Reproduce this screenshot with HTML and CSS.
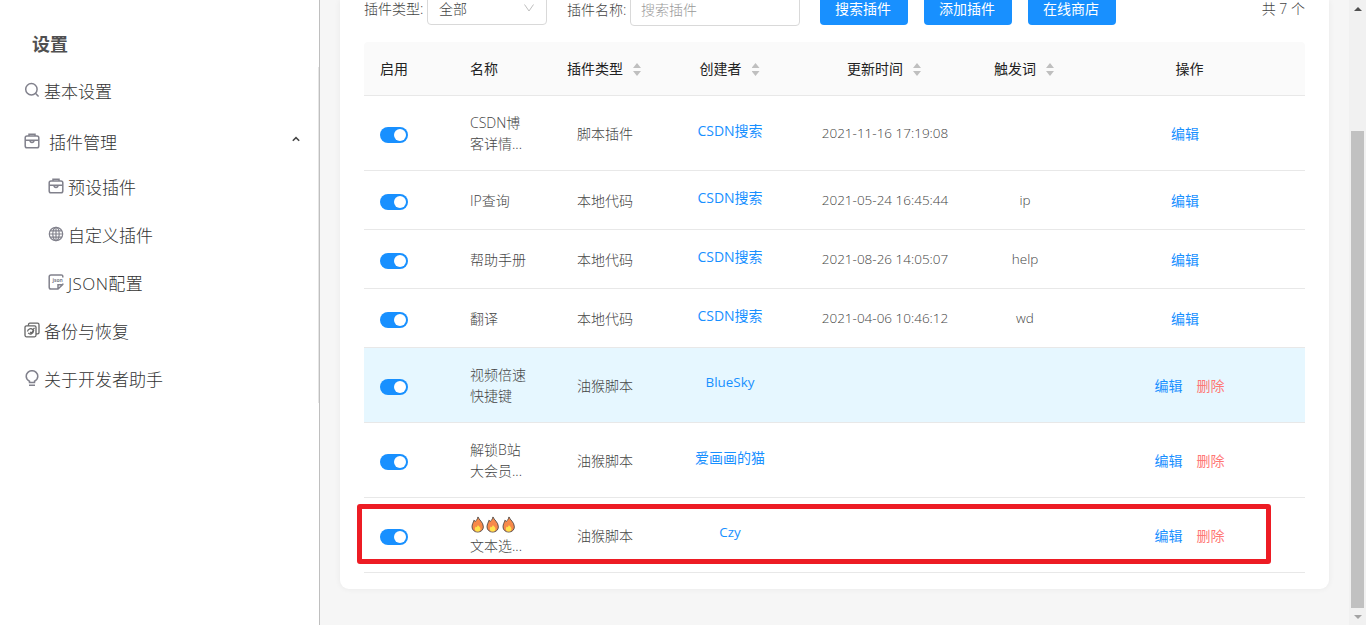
FILE: index.html
```html
<!DOCTYPE html>
<html lang="zh-CN">
<head>
    <meta charset="UTF-8">
    <meta name="viewport" content="width=device-width, initial-scale=1.0">
    <title>设置</title>
    <link rel="stylesheet" href="styles.css">
</head>
<body>
    <!-- shared icons -->
    <svg class="sprite">
        <symbol id="icon-case" viewBox="0 0 16 16">
            <rect x="1.2" y="3" width="13.6" height="11.8" rx="1.8"/>
            <path d="M5 3V1.2h6V3M1.2 7.2h13.6M6 7.4c.2 2.8 3.8 2.8 4 0"/>
        </symbol>
        <symbol id="icon-fire" viewBox="0 0 16 18">
            <path d="M8.3 1C9.2 4 14 6.500 14 11.500c0 3.200-2.500 5.500-6 5.500s-6-2.300-6-5.500C2 8.500 3.500 7 4 4.500l1.500 1.200C7 4.500 7.800 3 8.300 1z" fill="#f7894a" stroke="#554c48" stroke-width="1"/>
            <path d="M8.300 9.500c.8 1.500 2.700 2.300 2.700 4.300 0 1.700-1.200 2.700-3 2.700s-3-1-3-2.700c0-1.300.5-2 1-2.800l1 .8z" fill="#ffe34d"/>
        </symbol>
    </svg>
    <div class="layout">
        <aside class="sidebar">
            <h2 class="sidebar-title">设置</h2>
            <ul class="menu">
                <li class="menu-item">
                    <svg class="icon" viewBox="0 0 16 16"><circle cx="7.400" cy="7.200" r="5.700"/><path d="M11.400 11.200l3.200 3.400"/></svg>
                    <span>基本设置</span>
                </li>
                <li class="menu-item menu-parent">
                    <svg class="icon"><use href="#icon-case"/></svg>
                    <span>插件管理</span>
                    <svg class="arrow" viewBox="0 0 8 6"><path d="M.8 4.800L4 1.600l3.200 3.200"/></svg>
                </li>
                <li class="menu-item menu-sub">
                    <svg class="icon"><use href="#icon-case"/></svg>
                    <span>预设插件</span>
                </li>
                <li class="menu-item menu-sub">
                    <svg class="icon icon-thin" viewBox="0 0 16 16"><circle cx="8" cy="8" r="6.700"/><ellipse cx="8" cy="8" rx="3.200" ry="6.700"/><path d="M8 1.300v13.400M1.300 8h13.400M2.300 4.800h11.400M2.300 11.200h11.400"/></svg>
                    <span>自定义插件</span>
                </li>
                <li class="menu-item menu-sub">
                    <svg class="icon" viewBox="0 0 16 16"><path d="M14.800 3.500V2.500c0-1-.6-1.600-1.600-1.600H3c-1 0-1.800.8-1.800 1.800v10.600c0 1 .8 1.800 1.800 1.800h7l4.800-4.600V9.500M10 15v-4.200h4.800"/><text class="icon-text" x="4.400" y="7.600">json</text></svg>
                    <span class="json">JSON配置</span>
                </li>
                <li class="menu-item">
                    <svg class="icon icon-dark" viewBox="0 0 16 16"><rect x="1" y="3.800" width="11" height="11" rx="1.500"/><path d="M4.500 3.800V2.500c0-.7.500-1.300 1.300-1.300h7.700c.8 0 1.500.6 1.500 1.500v7.800c0 .8-.6 1.300-1.300 1.300H12M3.500 9.500c.3-2.800 3.800-3.700 5.300-1.700l1.700-2M9.500 9c-.2 3-3.600 4-5.300 1.800M6 10l1.500 1L10 8"/></svg>
                    <span>备份与恢复</span>
                </li>
                <li class="menu-item">
                    <svg class="icon" viewBox="0 0 16 16"><path d="M5.500 12.500V11.200C3.400 10.200 2.200 8.500 2.200 6.300a5.800 5.600 0 0 1 11.600 0c0 2.200-1.200 3.900-3.300 4.900v1.300zM5 15.200h6"/></svg>
                    <span>关于开发者助手</span>
                </li>
            </ul>
        </aside>
        <main class="main">
            <section class="card">
                <div class="toolbar">
                    <label class="label-type">插件类型:</label>
                    <div class="select">
                        <span>全部</span>
                        <svg viewBox="0 0 12 10"><path d="M1.500 1.500L6 8l4.500-6.500"/></svg>
                    </div>
                    <label class="label-name">插件名称:</label>
                    <input class="input" type="text" placeholder="搜索插件">
                    <button class="btn">搜索插件</button>
                    <button class="btn">添加插件</button>
                    <button class="btn">在线商店</button>
                    <span class="total">共 7 个</span>
                </div>
                <table class="table">
                    <colgroup>
                        <col class="col-enable">
                        <col class="col-name">
                        <col class="col-type">
                        <col class="col-author">
                        <col class="col-time">
                        <col class="col-word">
                        <col>
                    </colgroup>
                    <thead>
                        <tr>
                            <th class="left">启用</th>
                            <th class="left">名称</th>
                            <th class="sortable">插件类型<i class="sorter"></i></th>
                            <th class="sortable">创建者<i class="sorter"></i></th>
                            <th class="sortable">更新时间<i class="sorter"></i></th>
                            <th class="sortable">触发词<i class="sorter"></i></th>
                            <th class="ops">操作</th>
                        </tr>
                    </thead>
                    <tbody>
                        <tr class="tall">
                            <td class="left"><i class="switch"></i></td>
                            <td class="left">CSDN博<br>客详情...</td>
                            <td>脚本插件</td>
                            <td><a class="author">CSDN搜索</a></td>
                            <td class="time">2021-11-16 17:19:08</td>
                            <td></td>
                            <td class="single"><a>编辑</a></td>
                        </tr>
                        <tr>
                            <td class="left"><i class="switch"></i></td>
                            <td class="left">IP查询</td>
                            <td>本地代码</td>
                            <td><a class="author">CSDN搜索</a></td>
                            <td class="time">2021-05-24 16:45:44</td>
                            <td class="word">ip</td>
                            <td class="single"><a>编辑</a></td>
                        </tr>
                        <tr>
                            <td class="left"><i class="switch"></i></td>
                            <td class="left">帮助手册</td>
                            <td>本地代码</td>
                            <td><a class="author">CSDN搜索</a></td>
                            <td class="time">2021-08-26 14:05:07</td>
                            <td class="word">help</td>
                            <td class="single"><a>编辑</a></td>
                        </tr>
                        <tr>
                            <td class="left"><i class="switch"></i></td>
                            <td class="left">翻译</td>
                            <td>本地代码</td>
                            <td><a class="author">CSDN搜索</a></td>
                            <td class="time">2021-04-06 10:46:12</td>
                            <td class="word">wd</td>
                            <td class="single"><a>编辑</a></td>
                        </tr>
                        <tr class="tall hover">
                            <td class="left"><i class="switch"></i></td>
                            <td class="left">视频倍速<br>快捷键</td>
                            <td>油猴脚本</td>
                            <td><a class="author latin">BlueSky</a></td>
                            <td></td>
                            <td></td>
                            <td class="ops"><a>编辑</a><a class="delete">删除</a></td>
                        </tr>
                        <tr class="tall">
                            <td class="left"><i class="switch"></i></td>
                            <td class="left">解锁B站<br>大会员...</td>
                            <td>油猴脚本</td>
                            <td><a class="author">爱画画的猫</a></td>
                            <td></td>
                            <td></td>
                            <td class="ops"><a>编辑</a><a class="delete">删除</a></td>
                        </tr>
                        <tr class="tall">
                            <td class="left"><i class="switch"></i></td>
                            <td class="left">
                                <div class="fires">
                                    <svg><use href="#icon-fire"/></svg>
                                    <svg><use href="#icon-fire"/></svg>
                                    <svg><use href="#icon-fire"/></svg>
                                </div>
                                文本选...
                            </td>
                            <td>油猴脚本</td>
                            <td><a class="author latin">Czy</a></td>
                            <td></td>
                            <td></td>
                            <td class="ops"><a>编辑</a><a class="delete">删除</a></td>
                        </tr>
                    </tbody>
                </table>
                <div class="mark"></div>
            </section>
        </main>
        <div class="scrollbar">
            <i class="scroll-up"></i>
            <div class="scroll-thumb"></div>
            <i class="scroll-down"></i>
        </div>
    </div>
</body>
</html>
```
FILE: styles.css
```css
* {
    box-sizing: border-box;
}
body {
    margin: 0;
    height: 100vh;
    overflow: hidden;
    font-family: "Open Sans", "Noto Sans CJK SC", sans-serif;
    font-size: 14px;
    font-weight: 300;
    line-height: 21px;
    color: #444;
    background: #f6f6f6;
}
.sprite {
    display: none;
}
.layout {
    display: flex;
    height: 100vh;
}

/* sidebar */
.sidebar {
    width: 320px;
    flex: none;
    padding-top: 31px;
    background: #fff;
    border-right: 1px solid #bfbfbf;
}
.sidebar-title {
    margin: 0 0 10px 32px;
    font-size: 18px;
    font-weight: 700;
    line-height: 26px;
    color: #505050;
}
.menu {
    margin: 0;
    padding: 0;
    list-style: none;
    border-right: 1px solid #e6e6e6;
}
.menu-item {
    display: flex;
    align-items: center;
    height: 48px;
    padding-left: 24px;
    font-size: 17px;
    color: #333;
}
.menu-sub {
    padding-left: 48px;
}
.menu-parent {
    padding-top: 6px;
    padding-right: 18px;
}
.menu-parent span {
    margin-left: 5px;
}
.json {
    letter-spacing: 0.4px;
}
.icon {
    width: 16px;
    height: 16px;
    flex: none;
    margin: -3px 4px 0 0;
    fill: none;
    stroke: #81818c;
    stroke-width: 1.5;
}
.icon-thin {
    stroke-width: 1.2;
}
.icon-dark {
    stroke: #666;
    stroke-width: 1.3;
}
.icon-text {
    font: 700 5px "Open Sans", sans-serif;
    fill: #81818c;
    stroke: none;
}
.arrow {
    width: 8px;
    height: 6px;
    margin: -7px 0 0 auto;
    fill: none;
    stroke: #444;
    stroke-width: 1.5;
}

/* content */
.main {
    flex: 1;
    padding: 0 20px;
}
.card {
    position: relative;
    height: 589px;
    padding: 0 24px;
    background: #fff;
    border-radius: 0 0 9px 9px;
    box-shadow: 0 0 6px rgba(0, 0, 0, 0.06);
}
.toolbar {
    display: flex;
    align-items: flex-start;
    height: 42px;
}
.label-type {
    width: 63px;
    margin-top: -2px;
}
.select {
    display: flex;
    align-items: center;
    justify-content: space-between;
    width: 120px;
    height: 32px;
    margin: -7px 20px 0 0;
    padding: 0 11px 2px;
    border: 1px solid #d9d9d9;
    border-radius: 4px;
}
.select svg {
    width: 12px;
    height: 10px;
    fill: none;
    stroke: #bfbfbf;
}
.label-name {
    width: 63px;
    margin-top: -1px;
}
.input {
    width: 170px;
    height: 32px;
    margin: -6px 20px 0 0;
    padding: 0 10px 2px;
    font: inherit;
    border: 1px solid #d9d9d9;
    border-radius: 4px;
}
.input::placeholder {
    color: #999;
}
.btn {
    width: 88px;
    height: 32px;
    margin: -7px 16px 0 0;
    padding: 0 2px 1px 0;
    font: inherit;
    font-weight: 400;
    color: #fff;
    background: #1890ff;
    border: none;
    border-radius: 4px;
}
.total {
    margin: -2px 0 0 auto;
}

/* table */
.table {
    width: 100%;
    table-layout: fixed;
    border-collapse: separate;
    border-spacing: 0;
    text-align: center;
}
.col-enable {
    width: 90px;
}
.col-name {
    width: 88px;
}
.col-type {
    width: 126px;
}
.col-author {
    width: 125px;
}
.col-time {
    width: 184px;
}
.col-word {
    width: 96px;
}
th {
    height: 54px;
    padding: 0;
    font-weight: 400;
    color: #222;
    background: #fafafa;
    border-bottom: 1px solid #e8e8e8;
    white-space: nowrap;
}
th:first-child {
    border-top-left-radius: 4px;
}
th:last-child {
    border-top-right-radius: 4px;
}
td {
    height: 59px;
    padding: 0;
    border-bottom: 1px solid #e8e8e8;
    white-space: nowrap;
}
.tall td {
    height: 75px;
}
.hover td {
    background: #e6f7ff;
}
.table .left {
    padding-left: 16px;
    text-align: left;
}
.time,
.word {
    padding-top: 1px;
    font-size: 13.5px;
}
.sortable {
    padding-right: 2px;
}
.ops {
    padding-left: 1px;
}
.single {
    padding-right: 8px;
}
.sorter {
    display: inline-block;
    width: 8px;
    height: 13px;
    margin-left: 10px;
    vertical-align: -2px;
    background: #bfbfbf;
    clip-path: polygon(50% 0, 100% 38%, 0 38%, 0 62%, 100% 62%, 50% 100%, 0 62%, 0 38%);
}
.switch {
    display: block;
    width: 28px;
    height: 16px;
    margin-top: 3px;
    padding: 2px;
    background: #1890ff;
    border-radius: 8px;
}
.switch::after {
    content: "";
    display: block;
    width: 12px;
    height: 12px;
    margin-left: 12px;
    background: #fff;
    border-radius: 50%;
}
a {
    font-weight: 400;
    color: #1890ff;
}
.author {
    display: block;
    margin-top: -5px;
    padding-right: 1px;
}
.latin {
    font-size: 13.4px;
}
.delete {
    margin-left: 14px;
    color: #ff7875;
}
.fires {
    display: flex;
    height: 21px;
    align-items: center;
}
.fires svg {
    width: 15.4px;
    height: 17px;
}
.mark {
    position: absolute;
    left: 17px;
    bottom: 25px;
    width: 914px;
    height: 60px;
    border: 5px solid #ed1c24;
    border-radius: 3px;
}

/* scrollbar */
.scrollbar {
    display: flex;
    flex-direction: column;
    align-items: center;
    width: 17px;
    padding: 7px 0 6px;
    background: #f1f1f1;
}
.scroll-up {
    border: 4px solid transparent;
    border-top: 0;
    border-bottom-color: #505050;
}
.scroll-thumb {
    width: 13px;
    height: 477px;
    margin: 120px 0 auto;
    background: #c1c1c1;
}
.scroll-down {
    border: 4px solid transparent;
    border-bottom: 0;
    border-top-color: #a3a3a3;
}
```
